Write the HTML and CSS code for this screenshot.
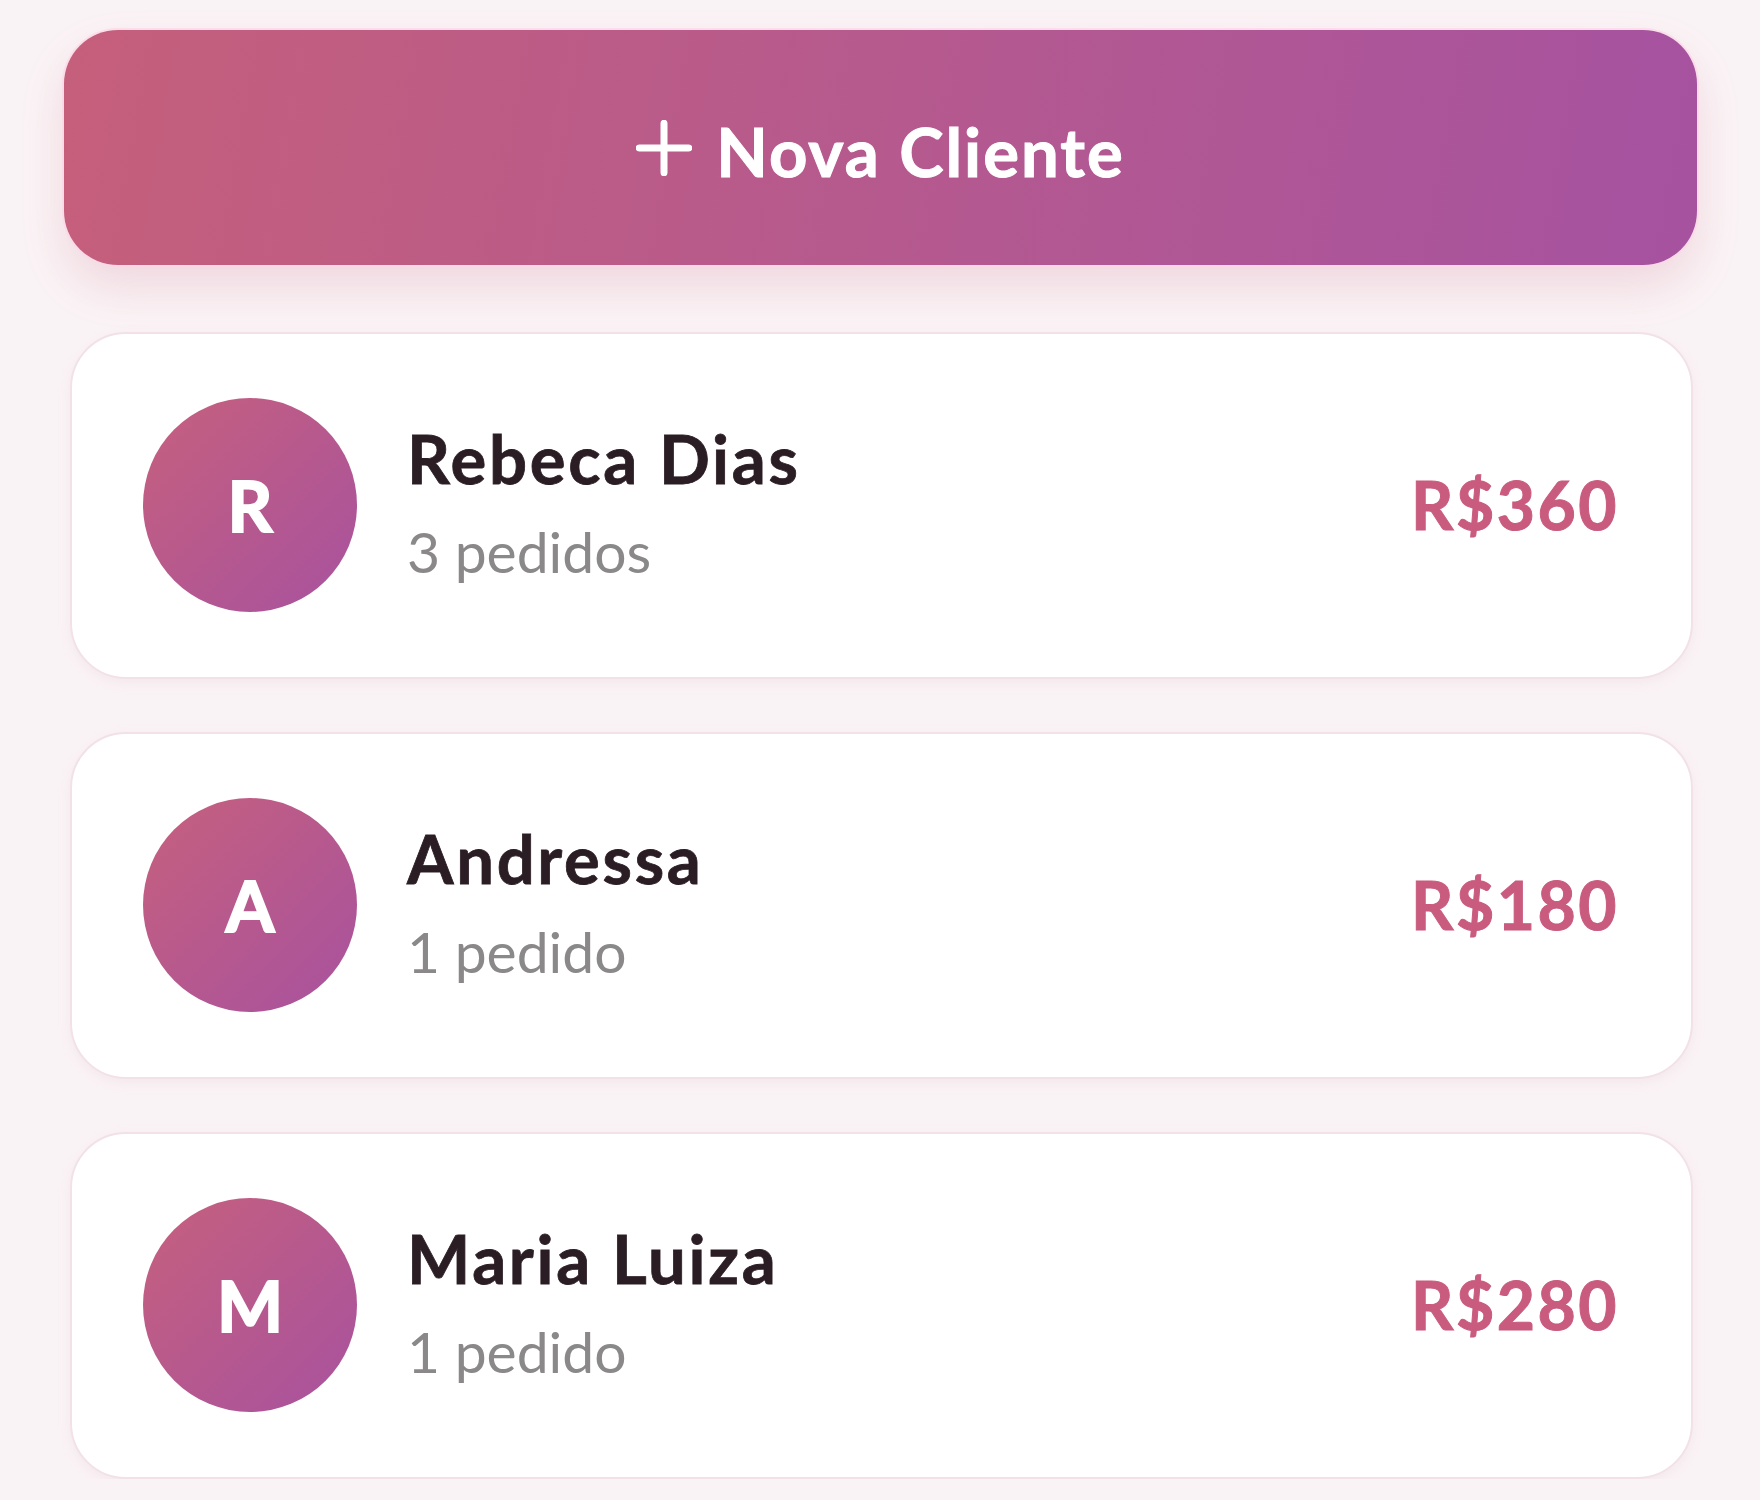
FILE: index.html
```html
<!DOCTYPE html>
<html lang="pt-BR">
<head>
    <meta charset="UTF-8">
    <meta name="viewport" content="width=device-width, initial-scale=1.0">
    <title>Clientes</title>
    <link rel="stylesheet" href="styles.css">
</head>
<body>
    <div class="container">
        <button class="new-client-btn" id="newClientBtn">
            <svg class="plus-icon" viewBox="0 0 52 52" aria-hidden="true">
                <path d="M26 3v46M3 26h46" stroke="currentColor" stroke-width="6.5" stroke-linecap="round" fill="none"/>
            </svg>
            <span>Nova Cliente</span>
        </button>

        <div class="clients-list" id="clientsList">
        </div>
    </div>

    <script>
        document.addEventListener('DOMContentLoaded', () => {
            const clientsList = document.getElementById('clientsList');

            const clients = [
                { nome: 'Rebeca Dias', pedidos: 3, total: 360 },
                { nome: 'Andressa', pedidos: 1, total: 180 },
                { nome: 'Maria Luiza', pedidos: 1, total: 280 }
            ];

            function displayClients(list) {
                clientsList.innerHTML = '';

                list.forEach(client => {
                    const card = document.createElement('div');
                    card.className = 'client-card';
                    const label = client.pedidos === 1 ? 'pedido' : 'pedidos';
                    card.innerHTML = `
                        <div class="client-avatar">${client.nome.charAt(0)}</div>
                        <div class="client-info">
                            <h3 class="client-name">${client.nome}</h3>
                            <p class="client-orders">${client.pedidos} ${label}</p>
                        </div>
                        <div class="client-total">R$${client.total}</div>
                    `;
                    clientsList.appendChild(card);
                });
            }

            displayClients(clients);
        });
    </script>
</body>
</html>
```

FILE: styles.css
```css
:root {
    --pink: #c45e7c;
    --purple: #a652a0;
    --price: #c95b7f;
    --text: #2b1d24;
    --text-light: #8a8888;
    --background: #faf3f5;
    --card-border: #f2e2e8;
}

* {
    margin: 0;
    padding: 0;
    box-sizing: border-box;
    font-family: 'Lato', 'Noto Sans', sans-serif;
}

body {
    background-color: var(--background);
    color: var(--text);
}

.container {
    padding: 30px 63px 0 64px;
}

.new-client-btn {
    width: 100%;
    height: 235px;
    border: none;
    border-radius: 54px;
    background: linear-gradient(100deg, #c55f7b 0%, #b75a8c 45%, #a652a0 100%);
    color: white;
    display: flex;
    align-items: center;
    justify-content: center;
    gap: 24px;
    font-size: 67px;
    font-weight: 700;
    cursor: pointer;
    box-shadow: 0 0 0 2px rgba(255, 214, 232, 0.7), 0 22px 44px rgba(196, 95, 124, 0.18);
}

.new-client-btn span {
    font-family: inherit;
    padding-top: 6px;
    letter-spacing: 2px;
    -webkit-text-stroke: 1px white;
}

.plus-icon {
    width: 56px;
    height: 56px;
}

.clients-list {
    margin-top: 67px;
    padding: 0 4px 0 6px;
    display: flex;
    flex-direction: column;
    gap: 53px;
}

.client-card {
    display: flex;
    align-items: center;
    background-color: white;
    border: 2px solid var(--card-border);
    border-radius: 56px;
    padding: 64px 72px 65px 71px;
    box-shadow: 0 4px 14px rgba(200, 150, 170, 0.1);
}

.client-avatar {
    width: 214px;
    height: 214px;
    flex-shrink: 0;
    border-radius: 50%;
    background: linear-gradient(135deg, #c6607d 0%, #a8529f 100%);
    color: white;
    display: flex;
    align-items: center;
    justify-content: center;
    font-size: 70px;
    font-weight: 700;
    -webkit-text-stroke: 2px white;
}

.client-info {
    flex: 1;
    margin-left: 50px;
    padding-bottom: 7px;
}

.client-name {
    font-size: 67px;
    font-weight: 700;
    line-height: 1.2;
    letter-spacing: 2.7px;
    color: var(--text);
    -webkit-text-stroke: 0.8px var(--text);
}

.client-orders {
    margin-top: 18px;
    font-size: 57px;
    line-height: 1.2;
    color: var(--text-light);
}

.client-total {
    font-size: 66px;
    font-weight: 700;
    line-height: 1.2;
    letter-spacing: 2.5px;
    color: var(--price);
    -webkit-text-stroke: 1px var(--price);
}
```
